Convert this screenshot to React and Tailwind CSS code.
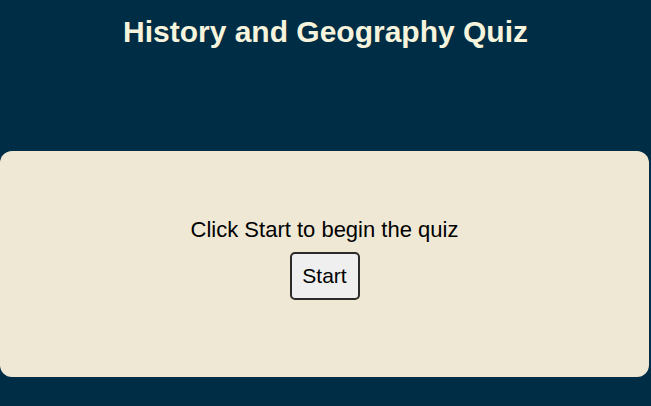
import React, { useState } from 'react';

const App = () => {
  const [started, setStarted] = useState(false);

  return (
    <div className="min-h-screen w-full bg-[#002d46] font-['Liberation_Sans',Arial,sans-serif]">
      <h1 className="pt-[13px] text-center text-[30px] font-bold leading-[38px] text-[#f6f4dc]">
        History and Geography Quiz
      </h1>

      <div className="mt-[100px] mr-[2px] flex h-[226px] flex-col items-center justify-center rounded-[12px] bg-[#efe8d5] pb-[12px]">
        <p className="text-[22px] leading-[26px] text-black">
          {started ? 'Question 1' : 'Click Start to begin the quiz'}
        </p>
        <button
          onClick={() => setStarted(true)}
          className="mt-[9px] h-[48px] w-[70px] rounded-[5px] border-2 border-[#2b2b2b] bg-[#efefef] text-[21px] text-black"
        >
          Start
        </button>
      </div>
    </div>
  );
};

export default App;
